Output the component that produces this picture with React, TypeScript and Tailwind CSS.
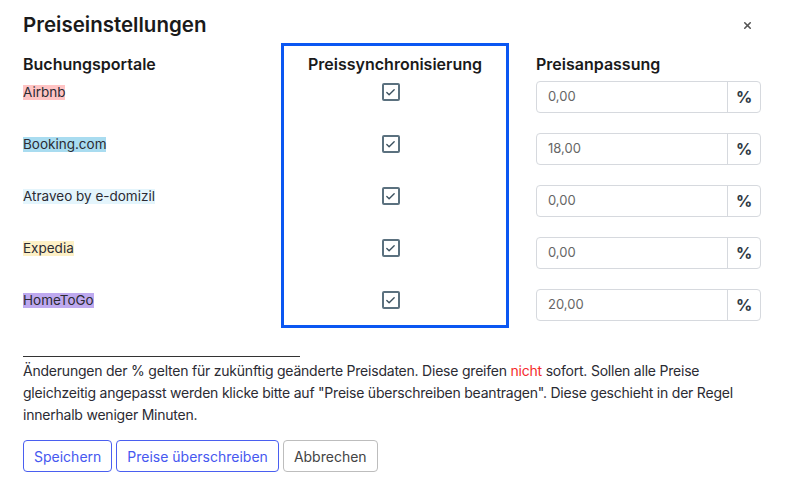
import { Check, X } from "lucide-react"

const portals = [
  { name: "Airbnb", bg: "bg-[#ffc4c4]", value: "0,00" },
  { name: "Booking.com", bg: "bg-[#a9dcf0]", value: "18,00" },
  { name: "Atraveo by e-domizil", bg: "bg-[#e4f5fc]", value: "0,00" },
  { name: "Expedia", bg: "bg-[#fdf0c6]", value: "0,00" },
  { name: "HomeToGo", bg: "bg-[#bea9ef]", value: "20,00" },
]

export default function App() {
  return (
    <div className="w-[787px] h-[480px] bg-white px-[23px] pt-[11px] font-['Inter',sans-serif] text-[#2b2b33]">
      {/* header */}
      <div className="flex items-center justify-between h-[28px]">
        <h1 className="text-[20.5px] leading-[28px] font-semibold text-[#1a1a1a]">Preiseinstellungen</h1>
        <X className="h-[11px] w-[11px] mr-[11px] text-[#555]" strokeWidth={3.5} />
      </div>

      <div className="flex items-start mt-[4px]">
        {/* portals */}
        <div className="w-[258px] pt-[9px]">
          <div className="h-[24px] text-[16px] leading-[24px] font-semibold text-[#1a1a1a]">Buchungsportale</div>
          <div className="mt-[6px] flex flex-col gap-[32px]">
            {portals.map((p) => (
              <div key={p.name} className="h-[20px] text-[13.5px] leading-[20px]">
                <span className={`${p.bg} leading-[15px] inline-block`}>{p.name}</span>
              </div>
            ))}
          </div>
        </div>

        {/* sync box */}
        <div className="w-[228px] border-[3px] border-[#0b57f2] pt-[6px] pb-[15px]">
          <div className="h-[24px] text-[16px] leading-[24px] font-semibold text-center text-[#1a1a1a]">
            Preissynchronisierung
          </div>
          <div className="mt-[6px] flex flex-col gap-[32px]">
            {portals.map((p) => (
              <div key={p.name} className="h-[20px] flex justify-center pt-[1px] pr-[9px]">
                <div className="h-[18px] w-[18px] rounded-[2px] border-2 border-[#5b717f] flex items-center justify-center">
                  <Check className="h-[11px] w-[11px] text-[#3d5260]" strokeWidth={3} />
                </div>
              </div>
            ))}
          </div>
        </div>

        {/* adjustments */}
        <div className="w-[225px] ml-[27px] pt-[9px]">
          <div className="h-[24px] text-[16px] leading-[24px] font-semibold text-[#1a1a1a]">Preisanpassung</div>
          <div className="mt-[5px] flex flex-col gap-[20px]">
            {portals.map((p) => (
              <div key={p.name} className="flex h-[32px] rounded-[4px] border border-[#d6d9de]">
                <div className="flex-1 flex items-center pl-[11px] text-[13px] text-[#666]">{p.value}</div>
                <div className="w-[33px] border-l border-[#d6d9de] flex items-center justify-center text-[16px] font-bold text-[#2f3a45]">
                  %
                </div>
              </div>
            ))}
          </div>
        </div>
      </div>

      {/* note */}
      <div className="mt-[28px] w-[277px] h-px bg-[#333]" />
      <p className="mt-[3px] text-[14px] leading-[22px] tracking-[-0.22px] whitespace-nowrap text-[#2b2b33]">
        Änderungen der % gelten für zukünftig geänderte Preisdaten. Diese greifen <span className="text-[#f52b2b]">nicht</span> sofort. Sollen alle Preise
        <br />
        gleichzeitig angepasst werden klicke bitte auf "Preise überschreiben beantragen". Diese geschieht in der Regel
        <br />
        innerhalb weniger Minuten.
      </p>

      <div className="mt-[14px] flex gap-[4px]">
        <button className="h-[32px] px-[10px] rounded-[4px] border border-[#4a5ff0] text-[14px] text-[#4658f0]">Speichern</button>
        <button className="h-[32px] px-[10px] rounded-[4px] border border-[#4a5ff0] text-[14px] text-[#4658f0]">Preise überschreiben</button>
        <button className="h-[32px] px-[10px] rounded-[4px] border border-[#bdbdbd] text-[14px] text-[#444]">Abbrechen</button>
      </div>
    </div>
  )
}
